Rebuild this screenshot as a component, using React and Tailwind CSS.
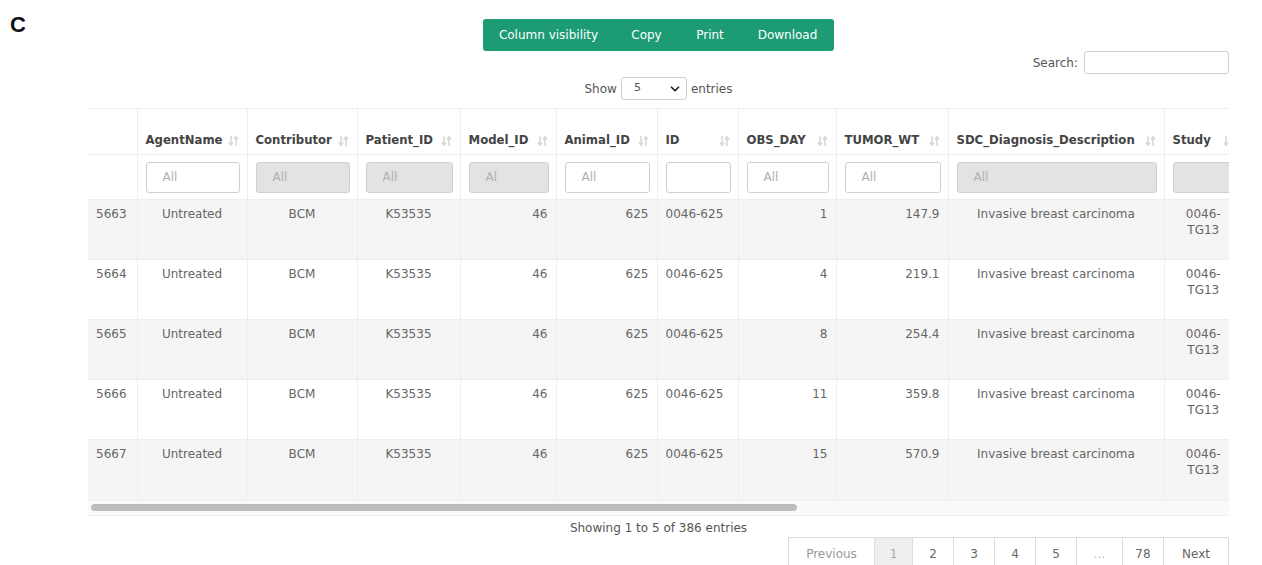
import { ChevronDown } from 'lucide-react';

const FONT = { fontFamily: '"DejaVu Sans", "Open Sans", sans-serif' };

// column setup: width, alignment of body cells, filter box style
const COLUMNS = [
  { key: 'row', label: '', w: 49, align: 'text-left' },
  { key: 'agent', label: 'AgentName', w: 110, align: 'text-center', filter: 'open', ph: 'All' },
  { key: 'contrib', label: 'Contributor', w: 110, align: 'text-center', filter: 'locked', ph: 'All' },
  { key: 'patient', label: 'Patient_ID', w: 103, align: 'text-center', filter: 'locked', ph: 'All' },
  { key: 'model', label: 'Model_ID', w: 96, align: 'text-right', filter: 'locked', ph: 'Al' },
  { key: 'animal', label: 'Animal_ID', w: 101, align: 'text-right', filter: 'open', ph: 'All' },
  { key: 'id', label: 'ID', w: 81, align: 'text-left', filter: 'open', ph: '' },
  { key: 'day', label: 'OBS_DAY', w: 98, align: 'text-right', filter: 'open', ph: 'All' },
  { key: 'wt', label: 'TUMOR_WT', w: 112, align: 'text-right', filter: 'open', ph: 'All' },
  { key: 'diag', label: 'SDC_Diagnosis_Description', w: 216, align: 'text-center', filter: 'locked', ph: 'All' },
  { key: 'study', label: 'Study', w: 78, align: 'text-center', filter: 'locked', ph: '' },
];

const ROWS = [
  { row: 5663, day: 1, wt: '147.9' },
  { row: 5664, day: 4, wt: '219.1' },
  { row: 5665, day: 8, wt: '254.4' },
  { row: 5666, day: 11, wt: '359.8' },
  { row: 5667, day: 15, wt: '570.9' },
].map((r) => ({
  ...r,
  agent: 'Untreated',
  contrib: 'BCM',
  patient: 'K53535',
  model: '46',
  animal: '625',
  id: '0046-625',
  diag: 'Invasive breast carcinoma',
  study: '0046-TG13',
}));

function SortIcon() {
  return (
    <svg width="11" height="12" viewBox="0 0 11 12" fill="none" stroke="#d9d9d9" strokeWidth="1.6">
      <path d="M3 1v9M0.8 7.6L3 10.2 5.2 7.6" />
      <path d="M8 11V2M5.8 4.4L8 1.8l2.2 2.6" />
    </svg>
  );
}

function FilterBox({ kind, ph }) {
  return (
    <div
      className={
        kind === 'locked'
          ? 'h-[31px] rounded-[3px] border border-[#cfcfcf] bg-[#e3e3e3] pl-4 text-[12px] leading-[29px] text-[#b0b0b0]'
          : 'h-[31px] rounded-[3px] border border-[#cfcfcf] bg-white pl-4 text-[12px] leading-[29px] text-[#b0b0b0]'
      }
    >
      {ph}
    </div>
  );
}

const PAGES = ['Previous', '1', '2', '3', '4', '5', '…', '78', 'Next'];

export default function App() {
  return (
    <div className="flex h-[565px] w-[1262px] overflow-hidden bg-white text-[#666]" style={FONT}>
      <div className="w-[88px] shrink-0 pl-[10px] pt-[8px] text-[22px] font-bold text-[#111]" style={{ fontFamily: '"Liberation Sans", Arial, sans-serif' }}>
        C
      </div>

      <div className="flex w-[1141px] shrink-0 flex-col">
        {/* export buttons */}
        <div className="mt-[19px] flex shrink-0 justify-center">
          <div className="flex h-[32px] overflow-hidden rounded-[3px] bg-[#1c9b74] text-[12px] text-white">
            <span className="flex w-[131px] items-center justify-center">Column visibility</span>
            <span className="flex w-[65px] items-center justify-center">Copy</span>
            <span className="flex w-[62px] items-center justify-center">Print</span>
            <span className="flex w-[93px] items-center justify-center">Download</span>
          </div>
        </div>

        <div className="flex h-[23px] shrink-0 items-center justify-end gap-[6px] text-[12px] text-[#555]">
          <span>Search:</span>
          <div className="h-[23px] w-[145px] rounded-[3px] border border-[#cfcfcf] bg-white" />
        </div>

        <div className="mt-[3px] flex h-[23px] shrink-0 items-center justify-center gap-[4px] text-[12px] text-[#555]">
          <span>Show</span>
          <div className="flex h-[23px] w-[66px] items-center justify-between rounded-[3px] border border-[#cfcfcf] bg-white pl-[12px] pr-[4px] text-[11px]">
            <span>5</span>
            <ChevronDown className="h-[14px] w-[14px] text-[#222]" strokeWidth={3} />
          </div>
          <span>entries</span>
        </div>

        {/* data table, scrolled horizontally */}
        <div className="mt-[8px] shrink-0 overflow-hidden">
          <table className="table-fixed border-collapse text-[12px]" style={{ width: 1154 }}>
            <colgroup>
              {COLUMNS.map((c) => (
                <col key={c.key} style={{ width: c.w }} />
              ))}
            </colgroup>
            <thead>
              <tr className="h-[46px] border-t border-[#eeeeee]">
                {COLUMNS.map((c, i) => (
                  <th
                    key={c.key}
                    className={`${i ? 'border-l' : ''} border-[#eeeeee] px-2 pb-[4px] align-bottom text-left text-[11.7px] font-bold text-[#444]`}
                  >
                    {c.label && (
                      <div className="flex items-center justify-between gap-1 whitespace-nowrap">
                        <span>{c.label}</span>
                        <SortIcon />
                      </div>
                    )}
                  </th>
                ))}
              </tr>
              <tr className="h-[45px] border-t border-[#eeeeee]">
                {COLUMNS.map((c, i) => (
                  <td key={c.key} className={`${i ? 'border-l' : ''} border-[#eeeeee] pl-2 pr-[7px] align-middle`}>
                    {c.filter && <FilterBox kind={c.filter} ph={c.ph} />}
                  </td>
                ))}
              </tr>
            </thead>
            <tbody>
              {ROWS.map((r, ri) => (
                <tr key={r.row} className={`h-[60px] border-t border-[#eeeeee] ${ri % 2 === 0 ? 'bg-[#f5f5f5]' : 'bg-white'}`}>
                  {COLUMNS.map((c, i) => (
                    <td
                      key={c.key}
                      className={`${i ? 'border-l' : ''} border-[#eeeeee] px-2 pt-[6px] align-top leading-[16px] ${c.align}`}
                    >
                      {r[c.key]}
                    </td>
                  ))}
                </tr>
              ))}
            </tbody>
          </table>

          {/* horizontal scrollbar */}
          <div className="h-[16px] border-t border-b border-[#eeeeee] bg-[#fafafa] pt-[3px]">
            <div className="ml-[3px] h-[7px] w-[706px] rounded-full bg-[#bdbdbd]" />
          </div>
        </div>

        <div className="mt-[4px] shrink-0 text-center text-[12px] leading-[16px] text-[#555]">Showing 1 to 5 of 386 entries</div>

        <div className="mt-px flex shrink-0 justify-end">
          <div className="flex h-[34px] border border-[#dddddd] text-[12px]">
            {PAGES.map((p, i) => (
              <span
                key={p}
                className={`flex items-center justify-center ${i ? 'border-l border-[#dddddd]' : ''} ${
                  p === 'Previous'
                    ? 'w-[85px] text-[#999]'
                    : p === 'Next'
                    ? 'w-[65px] text-[#666]'
                    : p === '1'
                    ? 'w-[38px] bg-[#eeeeee] text-[#aaa]'
                    : p === '…'
                    ? 'w-[46px] text-[#bbb]'
                    : 'w-[41px] text-[#666]'
                }`}
              >
                {p}
              </span>
            ))}
          </div>
        </div>
      </div>
    </div>
  );
}
